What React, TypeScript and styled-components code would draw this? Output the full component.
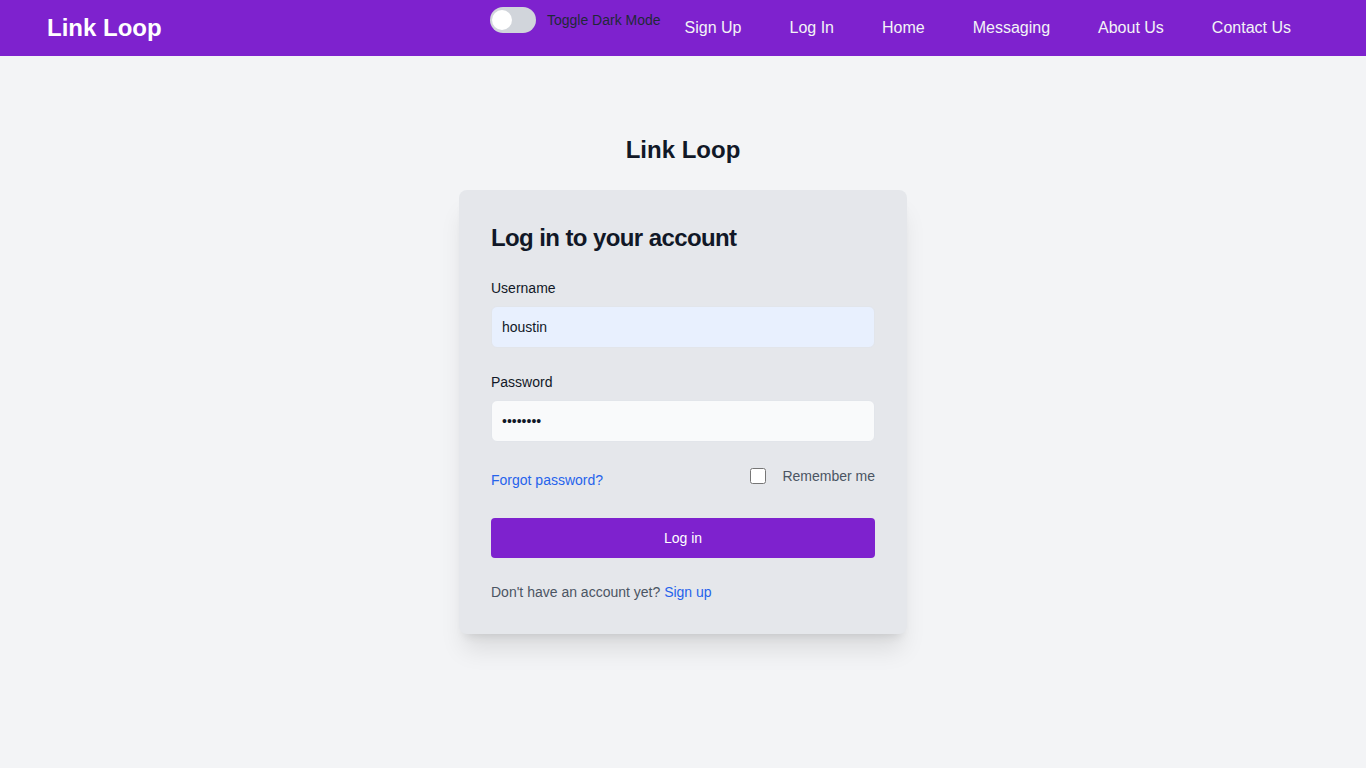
import styled, { createGlobalStyle } from "styled-components";

const GlobalStyle = createGlobalStyle`
  * { box-sizing: border-box; }
  body {
    margin: 0;
    background: #f3f4f6;
    font-family: "Liberation Sans", Arial, sans-serif;
  }
`;

const links = ["Sign Up", "Log In", "Home", "Messaging", "About Us", "Contact Us"];

export default function App() {
  return (
    <>
      <GlobalStyle />
      <NavBarSld>
        <LogoSld>Link Loop</LogoSld>
        <NavListSld>
          <ToggleWrapSld>
            <ToggleTrackSld>
              <ToggleKnobSld />
            </ToggleTrackSld>
            <ToggleTextSld>Toggle Dark Mode</ToggleTextSld>
          </ToggleWrapSld>
          {links.map((l) => (
            <NavLinkSld key={l} href="#">
              {l}
            </NavLinkSld>
          ))}
        </NavListSld>
      </NavBarSld>
      <MainSld>
        <PageTitleSld>Link Loop</PageTitleSld>
        <CardSld>
          <CardTitleSld>Log in to your account</CardTitleSld>
          <FieldSld>
            <LabelSld>Username</LabelSld>
            <InputSld $autofill defaultValue="houstin" />
          </FieldSld>
          <FieldSld>
            <LabelSld>Password</LabelSld>
            <InputSld type="password" defaultValue="password" />
          </FieldSld>
          <OptionsRowSld>
            <ForgotLinkSld href="#">Forgot password?</ForgotLinkSld>
            <RememberSld>
              <CheckboxSld type="checkbox" />
              <span>Remember me</span>
            </RememberSld>
          </OptionsRowSld>
          <SubmitSld>Log in</SubmitSld>
          <FooterTextSld>
            Don't have an account yet? <BlueLinkSld href="#">Sign up</BlueLinkSld>
          </FooterTextSld>
        </CardSld>
      </MainSld>
    </>
  );
}

const NavBarSld = styled.nav`
  height: 56px;
  background: #7e22ce;
  display: flex;
  justify-content: space-between;
  padding: 0 51px 0 47px;
`;

const LogoSld = styled.div`
  font-size: 24px;
  font-weight: bold;
  color: #ffffff;
  line-height: 56px;
`;

const NavListSld = styled.div`
  display: flex;
  align-items: center;
`;

const ToggleWrapSld = styled.label`
  display: flex;
  align-items: center;
  align-self: flex-start;
  margin-top: 7px;
`;

const ToggleTrackSld = styled.div`
  width: 46px;
  height: 26px;
  border-radius: 13px;
  background: #d1d5db;
  padding: 3px 0 0 2px;
`;

const ToggleKnobSld = styled.div`
  width: 20px;
  height: 20px;
  border-radius: 50%;
  background: #ffffff;
`;

const ToggleTextSld = styled.span`
  margin-left: 11px;
  font-size: 14px;
  color: #1f2937;
`;

const NavLinkSld = styled.a`
  padding: 0 24px;
  font-size: 16px;
  color: #f3f4f6;
  text-decoration: none;
`;

const MainSld = styled.main`
  display: flex;
  flex-direction: column;
  align-items: center;
  min-height: calc(100vh - 56px);
  padding-top: 78px;
`;

const PageTitleSld = styled.h1`
  margin: 0 0 24px;
  font-size: 24px;
  line-height: 32px;
  font-weight: bold;
  color: #111827;
`;

const CardSld = styled.div`
  width: 448px;
  background: #e5e7eb;
  border-radius: 8px;
  padding: 32px;
  box-shadow: 0 20px 25px -5px rgba(0, 0, 0, 0.1), 0 8px 10px -6px rgba(0, 0, 0, 0.1);
  display: flex;
  flex-direction: column;
  gap: 24px;
`;

const CardTitleSld = styled.h2`
  margin: 0;
  font-size: 24px;
  line-height: 32px;
  font-weight: bold;
  letter-spacing: -0.6px;
  color: #111827;
`;

const FieldSld = styled.div`
  display: flex;
  flex-direction: column;
  gap: 8px;
`;

const LabelSld = styled.label`
  font-size: 14px;
  line-height: 20px;
  color: #111827;
`;

const InputSld = styled.input<{ $autofill?: boolean }>`
  height: 42px;
  border: 1px solid #e2e5ea;
  border-radius: 6px;
  padding: 0 10px;
  font-size: 14px;
  font-family: "Liberation Sans", Arial, sans-serif;
  color: #111827;
  background: ${(p) => (p.$autofill ? "#e8f0fe" : "#f9fafb")};
  outline: none;
`;

const OptionsRowSld = styled.div`
  display: flex;
  justify-content: space-between;
  align-items: flex-start;
  height: 28px;
`;

const ForgotLinkSld = styled.a`
  margin-top: 4px;
  font-size: 14px;
  line-height: 20px;
  color: #2563eb;
  text-decoration: none;
`;

const RememberSld = styled.label`
  display: flex;
  align-items: center;
  gap: 16px;
  font-size: 14px;
  line-height: 20px;
  color: #4b5563;
`;

const CheckboxSld = styled.input`
  width: 16px;
  height: 16px;
  margin: 0;
`;

const SubmitSld = styled.button`
  height: 40px;
  border: none;
  border-radius: 4px;
  background: #7e22ce;
  color: #ffffff;
  font-size: 14px;
  font-family: "Liberation Sans", Arial, sans-serif;
`;

const FooterTextSld = styled.p`
  margin: 0;
  font-size: 14px;
  line-height: 20px;
  color: #4b5563;
`;

const BlueLinkSld = styled.a`
  color: #2563eb;
  text-decoration: none;
`;
